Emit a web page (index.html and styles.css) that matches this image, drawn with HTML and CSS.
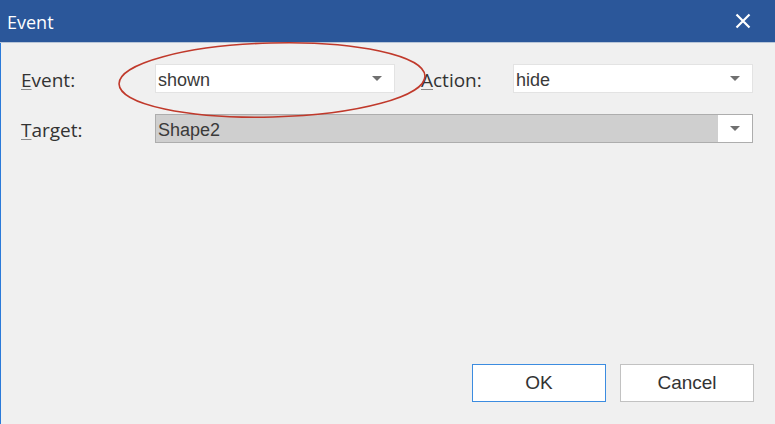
FILE: index.html
```html
<!DOCTYPE html>
<html lang="en">
<head>
  <meta charset="UTF-8" />
  <title>Event</title>
  <link rel="stylesheet" href="styles.css">
</head>
<body>
  <div class="dialog">
    <header class="titlebar">
      <span class="title">Event</span>
      <span class="close">
        <svg width="16" height="16" viewBox="0 0 16 16"><path d="M1.5 1.5 L14.5 14.5 M14.5 1.5 L1.5 14.5" stroke="#fff" stroke-width="2.2" fill="none"/></svg>
      </span>
    </header>

    <main class="content">
      <div class="row">
        <label class="label"><u>E</u>vent:</label>
        <div class="select small">
          <span class="value">shown</span>
          <span class="drop"><i class="arrow"></i></span>
        </div>
        <label class="label action"><u>A</u>ction:</label>
        <div class="select small">
          <span class="value">hide</span>
          <span class="drop"><i class="arrow"></i></span>
        </div>
      </div>
      <div class="row">
        <label class="label"><u>T</u>arget:</label>
        <div class="select wide">
          <span class="value selected">Shape2</span>
          <span class="drop"><i class="arrow"></i></span>
        </div>
      </div>
    </main>

    <footer class="buttons">
      <button class="btn default">OK</button>
      <button class="btn">Cancel</button>
    </footer>

    <svg class="mark" width="775" height="424" viewBox="0 0 775 424">
      <ellipse cx="272" cy="80" rx="153" ry="37" transform="rotate(-1.5 272 80)" fill="none" stroke="#c0392b" stroke-width="1.6"/>
    </svg>
  </div>
</body>
</html>
```

FILE: styles.css
```css
body { margin: 0; font-family: "Liberation Sans", Arial, sans-serif; background: #f0f0f0; }
.dialog { position: relative; width: 775px; height: 424px; display: flex; flex-direction: column; overflow: hidden; background: #f0f0f0; }
.titlebar { height: 42px; background: #2b579a; border-bottom: 1px solid #b9c6d8; display: flex; align-items: center; justify-content: space-between; padding: 0 24px 0 7px; }
.title { color: #fff; font-family: "Open Sans", sans-serif; font-size: 18px; padding-top: 2px; }
.close { display: flex; }
.content { flex: 1; border-left: 1px solid #2a7ad9; padding: 21px 0 0 20px; display: flex; flex-direction: column; gap: 21px; }
.row { display: flex; align-items: center; height: 29px; }
.label { width: 134px; font-family: "Open Sans", sans-serif; font-size: 19px; color: #333; padding-top: 3px; }
.label u { text-decoration-color: #888; text-underline-offset: 2px; }
.label.action { width: 92px; padding-left: 26px; }
.select { height: 27px; background: #fff; border: 1px solid #e3e3e3; display: flex; align-items: stretch; font-size: 18px; color: #3a3a3a; }
.value { flex: 1; display: flex; align-items: center; padding: 3px 0 0 2px; }
.drop { width: 34px; display: flex; align-items: center; justify-content: center; }
.select.small { width: 238px; }
.select.wide { width: 596px; border-color: #adadad; }
.value.selected { background: #cfcfcf; }
.arrow { width: 0; height: 0; border-left: 5px solid transparent; border-right: 5px solid transparent; border-top: 5px solid #707070; }
.buttons { border-left: 1px solid #2a7ad9; display: flex; justify-content: flex-end; gap: 14px; padding: 0 21px 22px 0; }
.btn { width: 134px; height: 38px; background: #fff; border: 1px solid #c2c2c2; font-family: "Liberation Sans", Arial, sans-serif; font-size: 19px; color: #333; padding: 0; }
.btn.default { border-color: #3c8ce0; }
.mark { position: absolute; left: 0; top: 0; pointer-events: none; }
```
